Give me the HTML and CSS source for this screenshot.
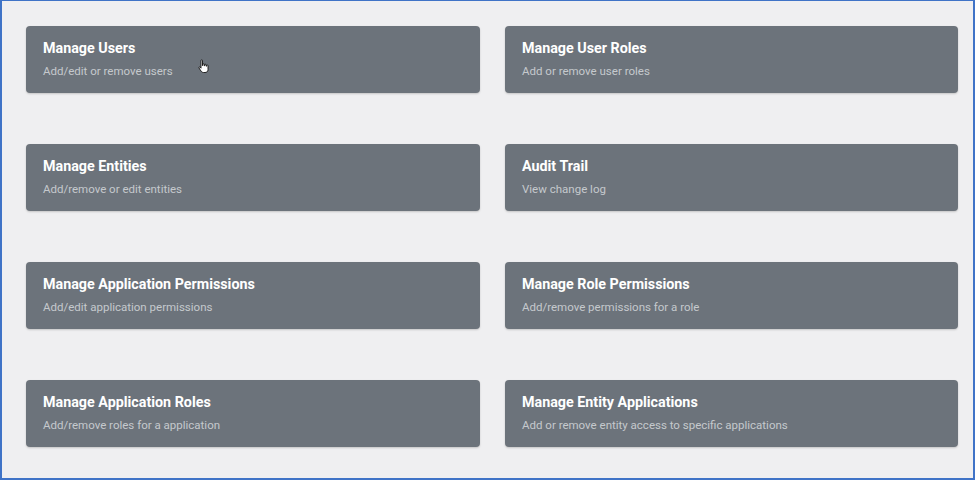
FILE: index.html
```html
<!DOCTYPE html>
<html>
<head>
<meta charset="utf-8">
<link rel="stylesheet" href="styles.css">
</head>
<body>
<div class="frame">
  <div class="grid">
    <div class="card">
      <div class="title">Manage Users</div>
      <div class="sub">Add/edit or remove users</div>
      <svg class="cursor" width="12" height="15" viewBox="0 0 12 15"><path d="M3 1.5 C3 0.7 4.5 0.7 4.5 1.5 L4.5 6.5 L5 6.5 L5 5.3 C5 4.6 6.4 4.6 6.4 5.3 L6.4 6.8 L6.8 6.8 L6.8 5.8 C6.8 5.1 8.2 5.1 8.2 5.8 L8.2 7.2 L8.6 7.2 L8.6 6.6 C8.6 5.9 10 5.9 10 6.6 L10 10.5 C10 12.5 8.8 13.5 7 13.5 L5.5 13.5 C4.3 13.5 3.6 12.8 3 12 L1 9 C0.6 8.3 1.5 7.6 2.1 8.2 L3 9.2 Z" fill="#fff" stroke="#111" stroke-width="0.9"/></svg>
    </div>
    <div class="card">
      <div class="title">Manage User Roles</div>
      <div class="sub">Add or remove user roles</div>
    </div>
    <div class="card">
      <div class="title">Manage Entities</div>
      <div class="sub">Add/remove or edit entities</div>
    </div>
    <div class="card">
      <div class="title">Audit Trail</div>
      <div class="sub">View change log</div>
    </div>
    <div class="card">
      <div class="title">Manage Application Permissions</div>
      <div class="sub">Add/edit application permissions</div>
    </div>
    <div class="card">
      <div class="title">Manage Role Permissions</div>
      <div class="sub">Add/remove permissions for a role</div>
    </div>
    <div class="card">
      <div class="title">Manage Application Roles</div>
      <div class="sub">Add/remove roles for a application</div>
    </div>
    <div class="card">
      <div class="title">Manage Entity Applications</div>
      <div class="sub">Add or remove entity access to specific applications</div>
    </div>
  </div>
</div>
</body>
</html>
```

FILE: styles.css
```css
html, body {
  margin: 0;
  padding: 0;
}
body {
  font-family: Roboto, "Liberation Sans", sans-serif;
  background: #efeff1;
}
.frame {
  box-sizing: border-box;
  width: 975px;
  height: 480px;
  border: 2px solid #3f73c7;
  border-top-width: 1px;
  background: #efeff1;
  padding: 25px 0 0 24px;
}
.grid {
  display: grid;
  grid-template-columns: 454px 453px;
  grid-auto-rows: 67px;
  column-gap: 25px;
  row-gap: 51px;
}
.card {
  position: relative;
  background: #6c737b;
  border-radius: 4px;
  box-shadow: 0 1px 2px rgba(0,0,0,0.18);
  padding: 13px 17px 0 17px;
  box-sizing: border-box;
}
.title {
  color: #ffffff;
  font-weight: 700;
  font-size: 14.3px;
  line-height: 18px;
}
.sub {
  color: #c5c9cd;
  font-size: 11.5px;
  line-height: 14px;
  margin-top: 7px;
}
.cursor {
  position: absolute;
  left: 172px;
  top: 33px;
}
```
